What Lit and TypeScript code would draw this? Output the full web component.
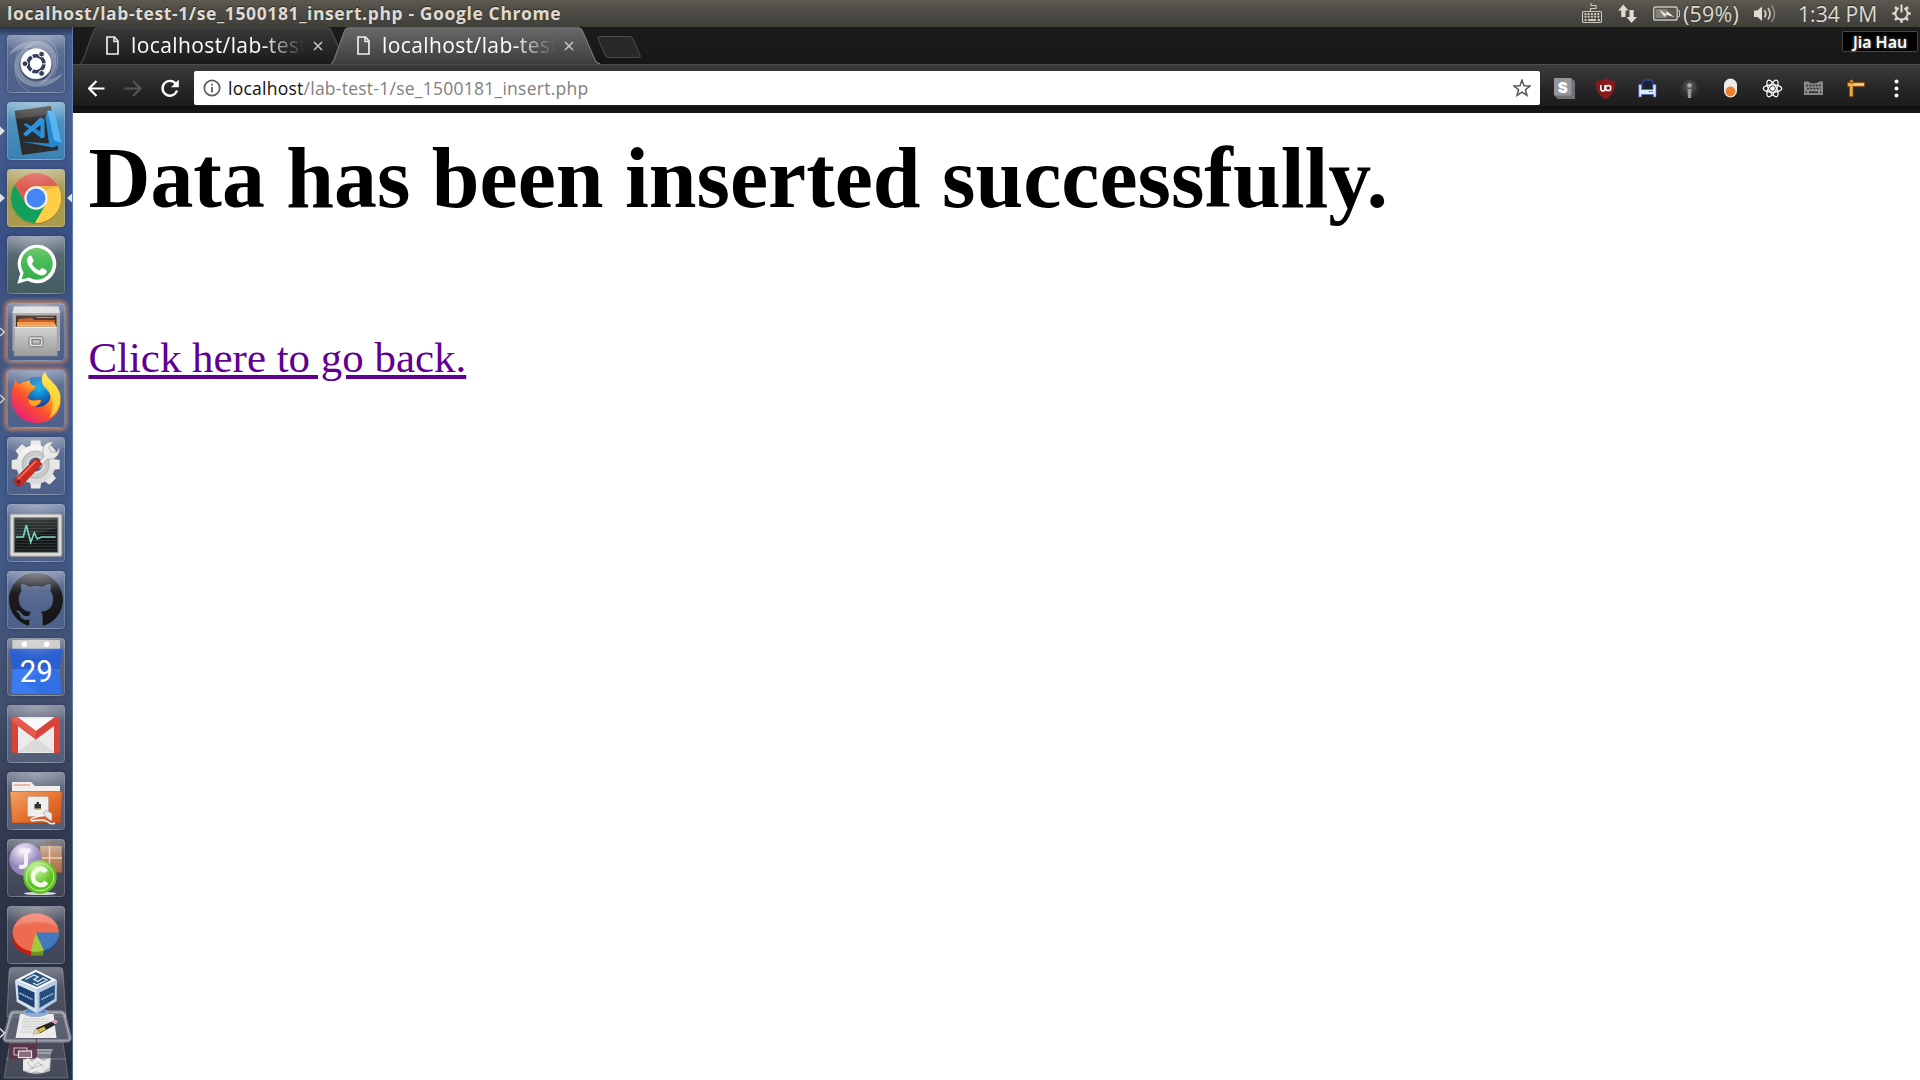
import { LitElement, html, css, svg } from "lit";
import { customElement, property } from "lit/decorators.js";
import { classMap } from "lit/directives/class-map.js";

/* ---------- launcher artwork, each drawn on a 58x58 tile ---------- */
const art: Record<string, unknown> = {
  dash: svg`
    <defs><radialGradient id="du"><stop offset="0" stop-color="#fff" stop-opacity=".05"/><stop offset="1" stop-color="#fff" stop-opacity=".28"/></radialGradient></defs>
    <path d="M2 20C8 6 32 2 42 10C56 20 50 46 30 50C44 44 48 24 36 16C24 10 10 14 2 20Z" fill="url(#du)"/>
    <path d="M56 38C48 52 26 56 15 47C2 36 8 12 28 8C14 16 12 36 22 42C34 48 48 44 56 38Z" fill="url(#du)"/>
    <path d="M22 56C8 50 4 30 12 16M38 2C52 10 54 28 46 42" fill="none" stroke="#fff" stroke-opacity=".25"/>
    <circle cx="29" cy="30" r="16.4" fill="#222b45" opacity=".5"/>
    <circle cx="29" cy="28.7" r="15.4" fill="#fff"/>
    <circle cx="29" cy="28.7" r="8" fill="none" stroke="#333e58" stroke-width="3.6" stroke-dasharray="15.4 1.35" stroke-dashoffset="-.7"/>
    <g fill="#333e58" stroke="#fff" stroke-width="1"><circle cx="18" cy="28.7" r="2.9"/><circle cx="34.6" cy="19.1" r="2.9"/><circle cx="34.6" cy="38.4" r="2.9"/></g>`,
  code: svg`
    <path d="M7.7 9L43.7 4L51.3 48L15 53Z" fill="#2c2c2d"/><path d="M7.7 9L43.7 4L45 12L9 17Z" fill="#555" opacity=".6"/>
    <path d="M40.5 8.5L47.7 9.3L54.3 41L46.5 45.5L15.5 39.8L42 41.5L38.5 16Z" fill="#2589d1"/>
    <path d="M40.5 8.5L47.7 9.3L54.3 41L47 38Z" fill="#54b4f0"/>
    <path d="M16.5 22.5L19 21L37.5 32V35.5L34 36Z" fill="#2184cc"/>
    <path d="M16 32L33.5 15.5L37.5 17.5V35L33.5 36.5V23L19 34.5Z" fill="#2c92dc"/>`,
  chrome: svg`
    <circle cx="29" cy="29.6" r="25.3" fill="#6d5e22" opacity=".5"/>
    <circle cx="29" cy="29" r="25" fill="#ffce44"/>
    <path d="M7.8 15.7A25 25 0 0 1 51.1 17.3H29L18.9 34.9Z" fill="#dc5b50"/>
    <path d="M7.8 15.7A25 25 0 0 0 28.1 54L39.1 34.9H18.9Z" fill="#12a05d"/>
    <path d="M28.1 54A25 25 0 0 0 51.1 17.3H29L39.1 34.9Z" fill="#ffce44"/>
    <path d="M29 17.3H51L40 21Z" fill="#b98a2e" opacity=".35"/>
    <circle cx="29" cy="29" r="11.7" fill="#f3f3f3"/><circle cx="29" cy="29" r="9.5" fill="#4486f4"/>`,
  whatsapp: svg`
    <defs><linearGradient id="wg" x1="0" y1="0" x2="0" y2="1"><stop offset="0" stop-color="#62c463"/><stop offset="1" stop-color="#2fae4b"/></linearGradient></defs>
    <path d="M10.3 47.8L13.2 37.5A19.3 19.3 0 1 1 20.5 44.8Z" fill="#fff"/>
    <path d="M14.6 43.6L16.6 36.6A15.9 15.9 0 1 1 22 41.6Z" fill="url(#wg)"/>
    <path d="M21.3 20.8C22.6 19.3 24 19.2 24.8 20.6L26.6 24.6C27 25.8 25 27.2 25 28C26.4 31 29 33.2 32.2 34.4C33.2 34.2 34.4 31.8 35.4 32L39.4 34.2C40.6 35 39.4 38 37.2 39C33 40.6 27.6 37.4 24.4 33.6C20.6 29.2 18.8 24 21.3 20.8Z" fill="#fff"/>`,
  files: svg`
    <defs><linearGradient id="fg" x1="0" y1="0" x2="0" y2="1"><stop offset="0" stop-color="#d2d2d2"/><stop offset="1" stop-color="#9c9c9c"/></linearGradient></defs>
    <path d="M7 3.5H51.5L53 10V48H5.5V10Z" fill="#a9a9a9"/><path d="M7 3.5H51.5L53 10H5.5Z" fill="#dedede"/>
    <path d="M9 12.5H49.5V28H9Z" fill="#433228"/>
    <path d="M11 16L25 15L27 17H48V28H11Z" fill="#c65b23"/><path d="M10 19H46L48.5 21V28H10Z" fill="#f19a50"/>
    <path d="M10 22H49V28H10Z" fill="#e6b67d"/><path d="M30 14.5H47" stroke="#dd7b34"/>
    <path d="M7.5 24H50.3V53H7Z" fill="url(#fg)" stroke="#8a8a8a" stroke-width=".5"/><path d="M7.5 24.5H50" stroke="#eee"/>
    <rect x="22" y="33.8" width="14" height="10" rx="1.6" fill="#ddd" stroke="#777"/><rect x="25" y="36.5" width="8.3" height="4.6" fill="#bbb" stroke="#777" stroke-width="1.1"/>`,
  firefox: svg`
    <defs><linearGradient id="fx" x1=".85" y1=".05" x2=".2" y2=".9"><stop offset="0" stop-color="#fff04c"/><stop offset=".35" stop-color="#ffae20"/><stop offset=".65" stop-color="#ff4f2d"/><stop offset="1" stop-color="#e72474"/></linearGradient>
    <radialGradient id="fb" cx=".55" cy=".3"><stop offset="0" stop-color="#18b5ee"/><stop offset="1" stop-color="#123e9c"/></radialGradient></defs>
    <circle cx="30" cy="26" r="19" fill="url(#fb)"/>
    <path d="M9 9C9 13 12 14 13 14C16 11 20 12 23 9.5C22.5 13 23.8 15 28 16C29 18 27 20 23.5 22C22 24 20 27 22 29C25 32 30 30 34 30C34 34 30 36 27 36C33 39 41 35 43 29C45 22 40 17 37 15C34 10 35 5 38 2C40 10 50 13 53 24C56 38 48 53 30 53C15 53 4 42 4.5 28C4.7 19 7 13 9 9Z" fill="url(#fx)"/>
    <path d="M38 2C40 10 50 13 53 24C54 35 50 44 42 48C48 38 46 27 40 20C34 15 33 8 38 2Z" fill="#ffe03d" opacity=".75"/>
    <path d="M22 29C25 32 30 30 34 30C33 34 30 36 26 36C23 35 21 32 22 29Z" fill="#ffa51f"/>`,
  settings: svg`
    <defs><linearGradient id="gg" x1="0" y1="0" x2="0" y2="1"><stop offset="0" stop-color="#f7f7f7"/><stop offset="1" stop-color="#d6d6d6"/></linearGradient></defs>
    <g transform="translate(28.7 27.5)"><g fill="url(#gg)">${[0, 45, 90, 135, 180, 225, 270, 315].map((a) => svg`<path transform="rotate(${a})" d="M-5.6 -17L-4.6 -24H4.6L5.6 -17Z" fill="#e8e8e8"/>`)}<circle r="19.5"/></g>
    <circle r="13.6" fill="#c9c9c9" stroke="#aeb0b2"/><circle r="8" fill="#4f678f" stroke="#dedede" stroke-width="2"/></g>
    <path d="M30 28L37 19C33 12 38 4 46 5L42 10L44 15L50 15L52 10C54 18 47 24 40 22L33 31Z" fill="#e9e9e9" stroke="#999" stroke-width=".7"/>
    <path d="M8 42L29 21L35 27L15 48C12 51 5 47 8 42Z" fill="#cf2c24" stroke="#8e1813" stroke-width=".7"/><path d="M11 42L29 24" stroke="#f27b6c" stroke-width="1.6"/>
    <circle cx="11.5" cy="45" r="2" fill="#4c2b39"/>`,
  monitor: svg`
    <defs><pattern id="pl" width="4" height="3" patternUnits="userSpaceOnUse"><path d="M0 .5H4" stroke="#3b4a47" stroke-width=".6"/></pattern></defs>
    <rect x="3" y="10" width="52" height="42.4" rx="1.6" fill="#d9d9d7" stroke="#888"/><rect x="6.6" y="13.2" width="44.8" height="35.6" fill="#777"/>
    <rect x="7.8" y="14.4" width="42.4" height="33.4" fill="#141918"/><rect x="7.8" y="14.4" width="42.4" height="33.4" fill="url(#pl)"/>
    <path d="M7.8 14.4H50.2V24L7.8 36Z" fill="#fff" opacity=".1"/>
    <path d="M9 33H16.3L19.3 21L23.7 38.3L27.3 28.7L30.3 35L34.3 33H48.7" fill="none" stroke="#7fd6c0" stroke-width="1.6"/>`,
  github: svg`
    <defs><linearGradient id="hg" x1="0" y1="0" x2="0" y2="1"><stop offset="0" stop-color="#5e6067"/><stop offset=".4" stop-color="#1d1c1f"/><stop offset="1" stop-color="#151314"/></linearGradient></defs>
    <g transform="translate(2 1.2) scale(2.25)"><path fill="url(#hg)" d="M12 .297c-6.63 0-12 5.373-12 12 0 5.303 3.438 9.8 8.205 11.385.6.113.82-.258.82-.577 0-.285-.01-1.04-.015-2.04-3.338.724-4.042-1.61-4.042-1.61C4.422 18.07 3.633 17.7 3.633 17.7c-1.087-.744.084-.729.084-.729 1.205.084 1.838 1.236 1.838 1.236 1.07 1.835 2.809 1.305 3.495.998.108-.776.417-1.305.76-1.605-2.665-.3-5.466-1.332-5.466-5.93 0-1.31.465-2.38 1.235-3.22-.135-.303-.54-1.523.105-3.176 0 0 1.005-.322 3.3 1.23.96-.267 1.98-.399 3-.405 1.02.006 2.04.138 3 .405 2.28-1.552 3.285-1.23 3.285-1.23.645 1.653.24 2.873.12 3.176.765.84 1.23 1.91 1.23 3.22 0 4.61-2.805 5.625-5.475 5.92.42.36.81 1.096.81 2.22 0 1.606-.015 2.896-.015 3.286 0 .315.21.69.825.57C20.565 22.092 24 17.592 24 12.297c0-6.627-5.373-12-12-12"/></g>`,
  calendar: svg`
    <rect x="5.3" y="2" width="47.7" height="10" rx="1.5" fill="#c9c9c9"/><circle cx="17.4" cy="6.2" r="2.8" fill="#fff"/><circle cx="39.8" cy="6.2" r="2.8" fill="#fff"/>
    <path d="M2.3 12Q2.5 10.7 4 10.7H54.5Q56 10.7 56 12L52.6 31H5.7Z" fill="#2b5fd0"/>
    <path d="M5.7 31H52.6L54.3 54.5Q54 55.8 53 55.8H5.3Q4.2 55.6 4.2 54.5Z" fill="#3c7cf2"/>
    <path d="M15 44L34 56H54L53 35L45 28Z" fill="#2f69dc" opacity=".6"/>
    <text x="29.2" y="44.2" text-anchor="middle" font-family="Roboto, sans-serif" font-size="31.5" textLength="33" lengthAdjust="spacingAndGlyphs" fill="#fff">29</text>`,
  gmail: svg`
    <path d="M9 12H49V48H9Z" fill="#ebebeb"/><path d="M11 47L29 33L47 47Z" fill="#dadada"/><path d="M11 14L29 30L47 14Z" fill="#fafafa"/>
    <path d="M5 14.5Q5 11.7 8 11.7H10L28.9 26L48 11.7H50Q53 11.7 53 14.5V45.5Q53 48 50.5 48H47V21L28.9 34.5L11 21V48H7.5Q5 48 5 45.5Z" fill="#d8433a"/>
    <path d="M5 14.5Q5 11.7 8 11.7H10L28.9 26V34.5L5 16.5Z" fill="#e4594e"/>`,
  network: svg`
    <defs><linearGradient id="ng" x1="0" y1="0" x2="1" y2="1"><stop offset="0" stop-color="#f0a468"/><stop offset=".55" stop-color="#e5702e"/><stop offset="1" stop-color="#cb4c14"/></linearGradient></defs>
    <path d="M5 10H24L28 14H53V26H5Z" fill="#f0eeee"/><path d="M7 13H23" stroke="#ec9c72" stroke-width="1.4"/>
    <path d="M3 19.5H55.3L53.6 51H5Z" fill="url(#ng)" stroke="#a8461c" stroke-width=".6"/>
    <rect x="20.5" y="24.5" width="21" height="20" rx="1.5" fill="#f0eeec" stroke="#b8a090" stroke-width=".6"/>
    <path d="M27.5 37V32H29.5V30H32V32H34V37Z" fill="#333"/><path d="M28 37H34" stroke="#bda36b" stroke-width="1.5"/>
    <path d="M38 43C30 44 21 47 25 48.7C31 49 36 46 41 50Q44 53 48 51" fill="none" stroke="#f4f4f4" stroke-width="1.5"/>
    <path d="M36 41L40 38.5L45 41.5V49L41 47Z" fill="#e8e8e8" stroke="#888" stroke-width=".5"/>`,
  java: svg`
    <defs><radialGradient id="jp" cx=".4" cy=".25"><stop offset="0" stop-color="#f4f0fa"/><stop offset="1" stop-color="#9384bd"/></radialGradient>
    <linearGradient id="jb" x1="0" y1="0" x2="0" y2="1"><stop offset="0" stop-color="#c6a58c"/><stop offset="1" stop-color="#aa6d45"/></linearGradient>
    <radialGradient id="jg" cx=".4" cy=".25"><stop offset="0" stop-color="#d3f7ae"/><stop offset="1" stop-color="#5fc024"/></radialGradient></defs>
    <ellipse cx="33" cy="54.5" rx="16" ry="1.6" fill="#e7e7e7" opacity=".9"/>
    <rect x="33" y="6.5" width="22" height="27" fill="url(#jb)" stroke="#8a5433" stroke-width=".6"/><path d="M33 19H55M42.5 6.5V33.500" stroke="#efcdb0" stroke-width="1.500"/><path d="M37 4Q40 1 42.500 5.500Q46 1 48 4" fill="none" stroke="#8b5d45" stroke-width="1.500"/>
    <circle cx="18.7" cy="20.5" r="16.4" fill="url(#jp)"/>
    <path d="M12.500 11.500H23.500M19 12V25Q18 29 12 27.500" fill="none" stroke="#f4f1f9" stroke-width="4"/>
    <circle cx="33" cy="38" r="16.7" fill="url(#jg)"/><circle cx="33" cy="38" r="13.8" fill="none" stroke="#c4f29b"/>
    <path d="M39 33C35 27 26 31 26 38C26 45 35 49 39.5 43" fill="none" stroke="#f1fbe8" stroke-width="4.6"/>`,
  pie: svg`
    <path d="M5.7 26V33C8 55 50 55 52 33V26Z" fill="#c41c12"/><path d="M24.5 44L36.5 43.5V49.5H24Z" fill="#6e9321"/><path d="M36.5 43.5Q50 39 52 26V33Q50 44 36.5 49.5Z" fill="#1f4d86"/>
    <ellipse cx="28.8" cy="26.5" rx="23.1" ry="19.2" fill="#ee6b50"/><path d="M28.8 26.5L24 45.4Q31 46.4 37 44.4Z" fill="#a3c93e"/><path d="M28.8 26.5H52Q52 39.5 37 44.4Z" fill="#4179bc"/>
    <path d="M7 22C10 4 46 2 51 22C40 14 18 15 7 22Z" fill="#fff" opacity=".17"/>`,
};

@customElement("launcher-tile")
class LauncherTile extends LitElement {
  @property() name = "";
  @property() state = "";
  static styles = css`
    :host { display: block; width: 73px; height: 58px; position: relative; }
    .tile { width: 58px; height: 58px; margin-left: 7px; border-radius: 4px; overflow: hidden; box-shadow: 0 0 5px #15203d66; background: linear-gradient(#8290ae, #5f7094 25%, #53658d 60%, #4d608a); position: relative; }
    .tile::after { content: ""; position: absolute; inset: 0; border-radius: 4px; border: 1px solid #d7e0f038; box-sizing: border-box; background: radial-gradient(ellipse 36px 20px at 50% 0, #ffffff45, #ffffff00); }
    .code { background: linear-gradient(#8ab5cf, #4a90bf 35%, #3c80b2); }
    .chrome { background: linear-gradient(#c0b482, #a8984e 40%, #ab9b4d); }
    .whatsapp { background: linear-gradient(#8591a0, #566771 35%, #415d60); }
    .calendar, .gmail, .network { background: linear-gradient(#7e8698, #5f677e 30%, #535d76); }
    .java, .pie { background: linear-gradient(#727784, #4d5263 30%, #3f4456); }
    .glow { box-shadow: 0 0 4px 2px #c98467; }
    svg { display: block; }
    .pip { position: absolute; top: 23px; left: 0; }
    .focus { position: absolute; top: 23px; right: 1px; }
  `;
  render() {
    const solid = this.state.includes("run");
    const open = this.state.includes("open");
    return html`
      <div class=${classMap({ tile: true, [this.name]: true, glow: open })}><svg width="58" height="58" viewBox="0 0 58 58">${art[this.name]}</svg></div>
      ${solid ? html`<svg class="pip" width="6" height="12"><path d="M0 1.5L5 6L0 10.5Z" fill="#dde0e4"/></svg>` : ""}
      ${open ? html`<svg class="pip" width="6" height="12"><path d="M0 2L4.3 6L0 10" fill="none" stroke="#dde0e4" stroke-width="1.2"/></svg>` : ""}
      ${this.state.includes("focus") ? html`<svg class="focus" width="6" height="12"><path d="M6 1.5L1 6L6 10.5Z" fill="#e4e4e4"/></svg>` : ""}`;
  }
}

@customElement("unity-launcher")
class UnityLauncher extends LitElement {
  static styles = css`
    :host { display: flex; flex-direction: column; gap: 9px; width: 73px; height: 1053px; padding-top: 8px; box-sizing: border-box; overflow: hidden; flex: none;
      background: linear-gradient(90deg, transparent 72px, #6f9bdd88 72px), linear-gradient(#26314d, #4a5e8d 9px, #4e6291 70px, #3f568a 150px, #3b5186 205px, #3a5088 212px, #41567f 300px, #415a89 420px, #435a86 530px, #424f6e 680px, #363d52 780px, #2f3448 880px, #292e3f 1053px); }
    .stack { display: block; margin-top: -6px; flex: none; }
  `;
  render() {
    const items: [string, string][] = [["dash", ""], ["code", "run"], ["chrome", "run focus"], ["whatsapp", ""], ["files", "open"], ["firefox", "open"], ["settings", ""], ["monitor", ""], ["github", ""], ["calendar", ""], ["gmail", ""], ["network", ""], ["java", ""], ["pie", ""]];
    return html`${items.map(([n, s]) => html`<launcher-tile .name=${n} .state=${s}></launcher-tile>`)}
      <svg class="stack" width="73" height="113" viewBox="0 0 73 113">
        <defs><linearGradient id="s1" x1="0" y1="0" x2="0" y2="1"><stop offset="0" stop-color="#7b808c"/><stop offset=".4" stop-color="#505564"/><stop offset="1" stop-color="#444957"/></linearGradient></defs>
        <path d="M12 .5H60Q63 .5 63 4L66 50H7L9 4Q9.2 .5 12 .5Z" fill="url(#s1)" stroke="#a3a8b4" stroke-opacity=".45"/>
        <path d="M14 45H60Q63.500 45 64.500 48L70 70Q70.500 74 67 74H7Q3.500 74 4.500 70L10.500 48Q11.500 45 14 45Z" fill="#7d828f" fill-opacity=".6" stroke="#fff" stroke-width="4" stroke-opacity=".22"/>
        <path d="M14 45H60Q63.500 45 64.500 48L70 70Q70.500 74 67 74H7Q3.500 74 4.500 70L10.500 48Q11.500 45 14 45Z" fill="none" stroke="#cfd2d8" stroke-width="1.200" stroke-opacity=".7"/>
        <path d="M20 47H53.5L56.5 71H15.5Z" fill="#ececec"/>
        <path d="M23 52H49M22.5 54.500H50M22 57H47M21.500 59.500H42M21 62H40M20 65H34" stroke="#c4c4c4" stroke-width=".8"/>
        <ellipse cx="35.7" cy="45.500" rx="12.500" ry="4.500" fill="#8eadd2"/><path d="M28 40H44L46 46H25Z" fill="#5f86b8"/>
        <path d="M35.7 2.7L57 13L37 23L15 13.3Z" fill="#f2f6fb"/><path d="M15 13.3L37 23V46.3L16.7 34.7Z" fill="#d3e0f0"/><path d="M57 13L37 23V46.3L56.7 34Z" fill="#b5cae4"/>
        <path d="M36 5L51.500 12.800L37 20L20.500 13Z" fill="#2b5480"/><path d="M25.500 12.500L34 8L38 10L34 12.500L38 14.500L43 11L47 13L37 18L33 16" fill="none" stroke="#dfeaf5" stroke-width="1.300"/>
        <path d="M17.700 18L34.500 25.500V41L18.700 32.500Z" fill="#1d416e"/><path d="M55 18L39.500 25.500V41L54.500 32Z" fill="#254d7e"/>
        <path d="M19.500 26L32.500 32.500M41.500 32.500L53 26.500" stroke="#b5c8de" stroke-width="1.800" stroke-dasharray="1.300 .7"/>
        <path d="M32.500 67.500L36.500 61L52 54.500L56 57.500L40.500 66Z" fill="#262622"/><path d="M37.500 62.500L44 59.500L46 62.500L40 65.500Z" fill="#d9bd45"/><path d="M32.500 67.500L36.500 61.500L40 66Z" fill="#e3cfa0"/><path d="M51 54.500L55.500 52.500L58 54.500L55.500 57.500Z" fill="#d59cc1"/>
        <path d="M10 75H63L68 111H4Z" fill="#656a77" fill-opacity=".5" stroke="#9aa0ac" stroke-opacity=".45"/><path d="M6 92H66" stroke="#c3c6cd" stroke-opacity=".4" stroke-width="1.200"/>
        <path d="M22 82H52.500L50 91H23Z" fill="#b4b6ba" fill-opacity=".45"/>
        <path d="M36 71H37V93H9V77H36Z" fill="#5b2e42" fill-opacity=".8"/>
        <rect x="14" y="81" width="13" height="7" fill="none" stroke="#d0c6cb"/><rect x="18.5" y="84" width="13" height="6.5" fill="#8a6b78" stroke="#e7e0e4" stroke-width="1.2"/>
        <path d="M37 83H52.500M38 86H51" stroke="#dcdcdc" stroke-opacity=".8"/>
        <path d="M23 92L51 91L50 104Q36 110 23 104Z" fill="#b9bbbd"/>
        <path d="M23 94L28 91L32 95L37 90L43 94L50 91L49 101L45 103L42 106L36 104L31 106L28 104L23 103Z" fill="#e8e9e8"/><path d="M27 95L32 101L38 95L44 101M29 103L43 97" stroke="#a2a4a6" stroke-width=".7" fill="none"/>
        <path d="M0 61.5L4.5 66L0 70.5" fill="none" stroke="#e3e5e8" stroke-width="1.3"/>
      </svg>`;
  }
}

@customElement("menu-bar")
class MenuBar extends LitElement {
  static styles = css`
    :host { display: flex; align-items: center; height: 27px; box-sizing: border-box; padding: 0 9px 0 7px; color: #dfdbd2; font-family: "Open Sans", "Noto Sans", sans-serif; background: linear-gradient(#5c5a50, #4c4a44 45%, #403f3a); white-space: nowrap; text-shadow: 0 -1px 1px #2b2a27; }
    .title, .battery-text, .clock { line-height: 27px; height: 28px; }
    .title { flex: 1; font-weight: 700; font-size: 17.5px; letter-spacing: 0.62px; }
    .battery-text { width: 70px; font-size: 21.5px; letter-spacing: .2px; }
    .clock { width: 94px; font-size: 21.2px; }
    svg { display: block; flex: none; }
  `;
  render() {
    return html`
      <span class="title">localhost/lab-test-1/se_1500181_insert.php - Google Chrome</span>
      <svg width="102" height="27" viewBox="1581 0 102 27">
        <g fill="none" stroke="#c9c6bd" stroke-width="1.1"><path d="M1590.5 11V8.5H1596V5.5H1591V3"/><rect x="1582.5" y="11.5" width="19" height="11" rx="1" fill="#4a4842"/><path d="M1584.5 14H1600M1584.5 16.8H1600" stroke-dasharray="2 1.2" stroke-width="1.9"/><path d="M1584.5 20H1586.5M1588 20H1596M1597.5 20H1600" stroke-width="1.8"/></g>
        <path d="M1623.300 4.500L1628.500 10.500H1625.500V17H1621.200V10.500H1618.200ZM1631.500 23L1626.500 17H1629.500V10H1633.700V17H1637Z" fill="#dfdbd2"/>
        <rect x="1653.7" y="7" width="23.5" height="13" rx="1.8" fill="none" stroke="#c5c2b9" stroke-width="1.5"/><rect x="1655.5" y="9" width="20" height="9" fill="#5d5b54"/><path d="M1655.5 9H1667V18H1655.5Z" fill="#85827a"/><path d="M1678 10.5H1679.5V16.5H1678" fill="none" stroke="#c5c2b9"/><path d="M1659 9.5L1666 14L1667 11L1674 17L1666 14.8L1664.5 17Z" fill="#eeeae2"/>
      </svg>
      <span class="battery-text">(59%)</span>
      <svg width="45" height="27" viewBox="1753 0 45 27"><path d="M1754 10.5H1757.5L1762 6.5V21L1757.5 17H1754Z" fill="#dfdbd2"/><g fill="none" stroke-width="1.7"><path d="M1764.5 10.3Q1767 13.7 1764.5 17.3" stroke="#dfdbd2"/><path d="M1768 8Q1772 13.7 1768 19.6" stroke="#d0ccc3"/><path d="M1771.5 5.5Q1777.5 13.7 1771.5 22" stroke="#8b887f"/></g></svg>
      <span class="clock">1:34 PM</span>
      <svg width="19" height="27" viewBox="0 0 19 27"><g transform="translate(9.5 13.5)" stroke="#dfdbd2" fill="none"><g stroke-width="2.5">${[45, 90, 135, 180, 225, 270, 315].map((a) => svg`<path transform="rotate(${a})" d="M0 -6V-9.2"/>`)}</g><path d="M-2.8 -5.4A6.1 6.1 0 1 0 2.8 -5.4" stroke-width="2"/><path d="M0 -9V-1" stroke-width="2"/></g></svg>`;
  }
}

@customElement("tab-strip")
class TabStrip extends LitElement {
  static styles = css`
    :host { display: flex; height: 37px; padding-left: 7px; background: linear-gradient(#1b1b1b, #191919 60%, #161616); position: relative; font-family: "Open Sans", "Noto Sans", sans-serif; box-sizing: border-box; }
    .tab { width: 269px; height: 37px; margin-right: -18px; position: relative; display: flex; align-items: center; flex: none; }
    .on { z-index: 1; }
    .bg { position: absolute; left: 0; top: 0; }
    .inner { position: relative; display: flex; align-items: center; padding-left: 26px; height: 37px; }
    .label { width: 173px; height: 37px; line-height: 36px; margin-left: 12px; white-space: nowrap; font-size: 21px; letter-spacing: .4px; color: #fff; -webkit-mask-image: linear-gradient(90deg, #000 76%, transparent); mask-image: linear-gradient(90deg, #000 76%, transparent); }
    .x { margin-left: 9px; margin-top: 1px; }
    .new { margin: 8px 0 0 14px; }
    .user { margin: 4px 2px 0 auto; width: 76px; height: 21px; box-sizing: border-box; border: 1px solid #474747; border-radius: 2px; background: #000; color: #fff; font-size: 16px; line-height: 20px; text-align: center; font-weight: 600; text-shadow: 0 0 3px #999; white-space: nowrap; }
    svg { display: block; flex: none; }
  `;
  tab(on: boolean) {
    const id = on ? "tab-on" : "tab-off";
    return html`<div class=${classMap({ tab: true, on })}>
      <svg class="bg" width="269" height="37"><defs><linearGradient id="${id}" x1="0" y1="0" x2="0" y2="1"><stop offset="0" stop-color="${on ? "#686868" : "#393939"}"></stop><stop offset="1" stop-color="${on ? "#3d3d3d" : "#1a1a1a"}"></stop></linearGradient></defs>
      <path d="M0 37Q2 36 3 33L13.5 4Q15 .8 18 .8H247Q250 .8 251.5 4L264 33Q265.5 37 269 37Z" fill="url(#${id})"/><path d="M0 36.5Q2 36 3 33L13.5 4Q15 .8 18 .8H247Q250 .8 251.5 4L264 33Q265.5 36.5 269 36.5" fill="none" stroke="${on ? "#777" : "#484848"}" stroke-width="1.2"/></svg>
      <div class="inner">
        <svg width="13" height="19"><path d="M1 1H8.5L12 5V18H1Z" fill="none" stroke="#eee" stroke-width="1.7"/><path d="M8 1V5.5H12" fill="none" stroke="#eee" stroke-width="1.5"/></svg>
        <span class="label">localhost/lab-test</span>
        <svg class="x" width="10" height="10"><path d="M1 1L9 9M9 1L1 9" stroke="#c7c7c7" stroke-width="1.5"/></svg>
      </div></div>`;
  }
  render() {
    return html`${this.tab(false)}${this.tab(true)}
      <svg class="new" width="46" height="24"><path d="M3 1.5H34Q36 1.5 37 4L44 20Q45 22.5 43 22.5H12.5Q10 22.5 9 20L2 4Q1 1.5 3 1.5Z" fill="#292929" stroke="#4b4b4b"/></svg>
      <span class="user">Jia Hau</span>`;
  }
}

@customElement("tool-bar")
class ToolBar extends LitElement {
  static styles = css`
    :host { display: flex; align-items: center; height: 49px; box-sizing: border-box; padding: 0 0 3px 15px; border-top: 1px solid #4e4e4e; background: linear-gradient(#3b3b3b, #262626 24px, #1c1c1c 41px, #0b0b0b 42px, #151515 44px, #131313); font-family: "Open Sans", "Noto Sans", sans-serif; }
    svg { display: block; flex: none; }
    .omni { width: 1346px; height: 34px; box-sizing: border-box; background: #fff; border-radius: 2px; display: flex; align-items: center; padding: 0 9px; color: #808080; }
    .url { flex: 1; margin-left: 7px; font-size: 17.5px; letter-spacing: .25px; white-space: nowrap; }
    .host { color: #111; }
  `;
  render() {
    return html`
      <svg width="106" height="34" viewBox="88 71 106 34"><g fill="none" stroke-width="2.2"><path d="M104.5 88.5H89.5M96.5 81L89 88.5L96.5 96" stroke="#fff"/><path d="M124.5 88.5H140M133 81L140.5 88.5L133 96" stroke="#555"/><path d="M176 84A7.4 7.4 0 1 0 177 90.5" stroke="#fff" stroke-width="2.4"/></g><path d="M178.8 79.5V87.3H171Z" fill="#fff"/></svg>
      <div class="omni">
        <svg width="18" height="18"><circle cx="9" cy="9" r="7.7" fill="none" stroke="#5a5a5a" stroke-width="1.7"/><path d="M9 8V13.3M9 4.8V6.6" stroke="#5a5a5a" stroke-width="1.8"/></svg>
        <span class="url"><span class="host">localhost</span>/lab-test-1/se_1500181_insert.php</span>
        <svg width="18" height="18"><path d="M9 1.3L11.1 6.7L17 7L12.4 10.7L14 16.4L9 13.2L4 16.4L5.6 10.7L1 7L6.9 6.7Z" fill="none" stroke="#555" stroke-width="1.5"/></svg>
      </div>
      <svg width="380" height="34" viewBox="1540 71 380 34">
        <path d="M1554 78H1570.5L1575 81V99H1557.5L1554 95Z" fill="#717177"/><rect x="1554" y="78" width="17.5" height="17.5" rx="1" fill="#96969d"/><text x="1562.7" y="92.5" text-anchor="middle" font-family="Inter, sans-serif" font-weight="900" font-size="15" fill="#fff">S</text>
        <path d="M1605.5 78Q1610 81.5 1615 81C1615.5 90 1613 95 1605.5 99.5C1598 95 1595.5 90 1596 81Q1601 81.5 1605.5 78Z" fill="#861a1c"/><path d="M1600.8 85V88.5Q1600.8 91 1603 91Q1605 91 1605 88.5V85" fill="none" stroke="#fff" stroke-width="1.5"/><circle cx="1608.2" cy="88" r="2.6" fill="none" stroke="#fff" stroke-width="1.5"/>
        <path d="M1642 88.500V83L1644.500 80H1651.500L1653 83V88.500" fill="#1c2032" stroke="#31468f" stroke-width="1.500"/><path d="M1638.800 84.500H1641.500V89.500H1653V84.500H1656V97H1653.500V94.500H1641.500V97H1638.800Z" fill="#dcecff" stroke="#4a68b8" stroke-width=".7"/><path d="M1649 91.500H1654" stroke="#304a89" stroke-dasharray="1.500 1"/>
        <circle cx="1689.5" cy="87.5" r="10" fill="#2e2e2e"/><circle cx="1689.5" cy="86.5" r="7" fill="#414141"/><circle cx="1689.5" cy="86" r="4" fill="#555"/><circle cx="1689.5" cy="85.5" r="2.2" fill="#aaa"/><path d="M1687.5 89H1691.5L1691 98H1688Z" fill="#999"/>
        <rect x="1724" y="78.5" width="13" height="19" rx="6.5" fill="#ececec"/><circle cx="1730.5" cy="91.5" r="4.9" fill="#ef812b"/>
        <g transform="translate(1772.5 88.5)" fill="none" stroke="#fff" stroke-width="1.25"><ellipse rx="9.3" ry="3.7"/><ellipse rx="9.3" ry="3.7" transform="rotate(60)"/><ellipse rx="9.3" ry="3.7" transform="rotate(120)"/><circle r="1.7" fill="#fff"/></g>
        <path d="M1804 81.500H1808Q1809.500 83.500 1813.500 83.500Q1817.500 83.500 1819 81.500H1823V95H1804Z" fill="#8b8b8b"/><path d="M1806 85.500H1821.500M1807 88.500H1820.500" stroke="#303030" stroke-width="1.500" stroke-dasharray="2 1.200"/><path d="M1809 92.200H1818" stroke="#303030" stroke-width="1.700"/><path d="M1805.500 92.200H1807M1820 92.200H1821.500" stroke="#303030" stroke-width="1.400"/>
        <path d="M1847.5 82.5H1864.5V86.5H1853V96.5H1849.5V86.5H1847.5ZM1850 80H1853V83H1850Z" fill="#efad45" stroke="#8e4f0c" stroke-width=".8"/><path d="M1854 84.5H1864" stroke="#ffe2a0"/>
        <g fill="#fff"><circle cx="1896.5" cy="81.5" r="2"/><circle cx="1896.5" cy="88.5" r="2"/><circle cx="1896.5" cy="95.5" r="2"/></g>
      </svg>`;
  }
}

@customElement("app-root")
class AppRoot extends LitElement {
  static styles = css`
    :host { display: block; width: 1920px; height: 1080px; overflow: hidden; background: #fff; }
    .desk { display: flex; }
    .window { flex: 1; min-width: 0; }
    .page { padding: 16px 15.4px; font-family: "Liberation Serif", serif; color: #000; }
    h1 { margin: 0; font-size: 85.85px; line-height: 98px; font-weight: 700; white-space: nowrap; }
    .link { display: inline-block; margin-top: 106px; color: #600090; font-size: 42.93px; line-height: 49px; text-decoration: underline; }
  `;
  render() {
    return html`<menu-bar></menu-bar>
      <div class="desk"><unity-launcher></unity-launcher>
        <div class="window"><tab-strip></tab-strip><tool-bar></tool-bar>
          <main class="page"><h1>Data has been inserted successfully.</h1><a class="link" href="#">Click here to go back.</a></main>
        </div>
      </div>`;
  }
}
